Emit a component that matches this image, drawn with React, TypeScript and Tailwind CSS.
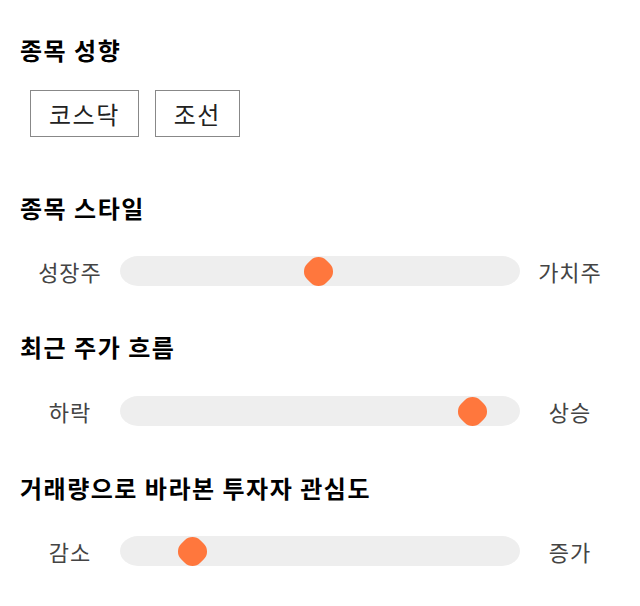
import React from 'react';

interface SliderRowProps {
  left: string;
  right: string;
  pos: number; // thumb centre, px from the track's left edge
}

const font = { fontFamily: '"Noto Sans CJK KR", "Noto Sans", sans-serif' };

const SliderRow = ({ left, right, pos }: SliderRowProps) => (
  <div className="flex items-center h-[30px]">
    <div className="w-[100px] text-center text-[22px] tracking-[1px] text-[#444]">{left}</div>
    <div className="relative w-[400px] h-[30px] bg-[#eeeeee] rounded-[18px/15px]">
      <div
        className="absolute top-[1.5px] w-[27px] h-[27px] -ml-[13.5px] rotate-45 rounded-[11px] bg-[#ff773d]"
        style={{ left: pos }}
      />
    </div>
    <div className="w-[100px] text-center text-[22px] tracking-[1px] text-[#444]">{right}</div>
  </div>
);

const Heading = ({ children, className = '' }: { children: React.ReactNode; className?: string }) => (
  <h2 className={`h-[30px] leading-[30px] text-[24px] tracking-[1.5px] font-bold text-black ${className}`}>{children}</h2>
);

export default function App() {
  return (
    <div className="w-[640px] h-[606px] bg-white px-5 pt-[35px]" style={font}>
      <Heading>종목 성향</Heading>
      <div className="flex gap-4 ml-[10px] mt-[25px]">
        <button className="h-[47px] px-[18px] border border-[#888] text-[24px] tracking-[1.5px] text-[#222]">코스닥</button>
        <button className="h-[47px] px-[18px] border border-[#888] text-[24px] tracking-[1.5px] text-[#222]">조선</button>
      </div>

      <Heading className="mt-[56px]">종목 스타일</Heading>
      <div className="mt-[33px]">
        <SliderRow left="성장주" right="가치주" pos={198} />
      </div>

      <Heading className="mt-[46px]">최근 주가 흐름</Heading>
      <div className="mt-[34px]">
        <SliderRow left="하락" right="상승" pos={352} />
      </div>

      <Heading className="mt-[47px]">거래량으로 바라본 투자자 관심도</Heading>
      <div className="mt-[33px]">
        <SliderRow left="감소" right="증가" pos={72} />
      </div>
    </div>
  );
}
